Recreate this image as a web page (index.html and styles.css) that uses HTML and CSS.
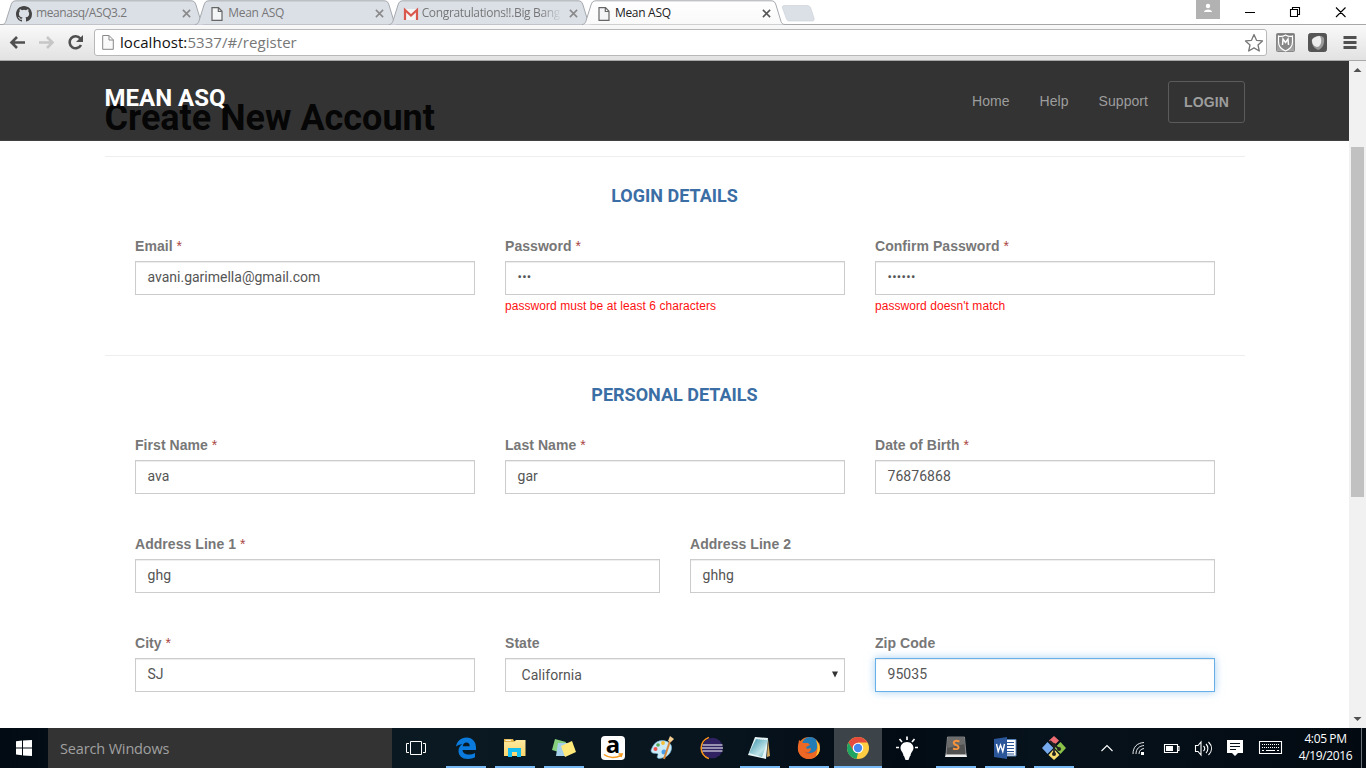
FILE: index.html
```html
<!DOCTYPE html>
<html lang="en">
<head>
<meta charset="utf-8">
<title>Mean ASQ</title>
<link rel="stylesheet" href="styles.css">
</head>
<body>
<svg class="defs" width="0" height="0" aria-hidden="true">
  <defs>
    <linearGradient id="tabActive" x1="0" y1="0" x2="0" y2="1"><stop offset="0" stop-color="#fff"/><stop offset="1" stop-color="#f9f9f9"/></linearGradient>
    <linearGradient id="silver" x1="0" y1="0" x2="0" y2="1"><stop offset="0" stop-color="#777"/><stop offset="1" stop-color="#aaa"/></linearGradient>
    <linearGradient id="folder" x1="0" y1="0" x2="0" y2="1"><stop offset="0" stop-color="#ffeaa0"/><stop offset="1" stop-color="#fad56b"/></linearGradient>
    <linearGradient id="note" x1="0" y1="0" x2="1" y2="1"><stop offset="0" stop-color="#348ea5"/><stop offset=".65" stop-color="#bde3e8"/><stop offset="1" stop-color="#5ba8b8"/></linearGradient>
    <linearGradient id="fox" x1="0" y1="0" x2="1" y2="1"><stop offset="0" stop-color="#f58220"/><stop offset=".6" stop-color="#e2491b"/><stop offset="1" stop-color="#fcb32b"/></linearGradient>
    <symbol id="tab" viewBox="0 0 203 25"><path d="M0 24.5C2 24.5 3 23.500 3.800 21.500L9 5C10 2 11 .8 14 .8H189C192 .8 193 2 194 5L199 21.500C199.800 23.500 201 24.500 203 24.500"/></symbol>
    <symbol id="page" viewBox="0 0 12 14"><path d="M1 .7H7.500L11 4.300V13.300H1ZM7.300 .7V4.500H11"/></symbol>
    <symbol id="close" viewBox="0 0 10 10"><path d="M1 1 9 9M9 1 1 9"/></symbol>
  </defs>
</svg>
<div class="screen">
  <div class="tabstrip">
    <div class="tab">
      <svg class="tab-shape"><use href="#tab"/></svg>
      <svg class="tab-icon" viewBox="0 0 16 16"><path fill="#444" d="M8 0C3.580 0 0 3.580 0 8c0 3.540 2.290 6.530 5.470 7.590.4.070.550-.17.550-.38v-1.490c-2.010.37-2.530-.49-2.690-.94-.09-.23-.48-.94-.82-1.130-.28-.15-.68-.52-.01-.53.630-.01 1.080.58 1.230.82.720 1.210 1.870.87 2.330.66.070-.52.280-.87.510-1.070-1.780-.2-3.640-.89-3.640-3.950 0-.87.310-1.590.82-2.150-.08-.2-.36-1.020.08-2.120 0 0 .67-.21 2.200.82a7.600 7.600 0 0 1 4 0c1.530-1.040 2.200-.82 2.200-.82.440 1.100.160 1.920.08 2.120.51.560.82 1.270.82 2.150 0 3.070-1.870 3.750-3.650 3.950.29.25.54.73.54 1.480v2.200c0 .21.150.46.550.38A8 8 0 0 0 16 8c0-4.420-3.580-8-8-8Z"/></svg>
      <span class="tab-title t1">meanasq/ASQ3.2</span><svg class="tab-close"><use href="#close"/></svg>
    </div>
    <div class="tab">
      <svg class="tab-shape"><use href="#tab"/></svg>
      <svg class="tab-icon doc"><use href="#page"/></svg>
      <span class="tab-title t2">Mean ASQ</span><svg class="tab-close"><use href="#close"/></svg>
    </div>
    <div class="tab">
      <svg class="tab-shape"><use href="#tab"/></svg>
      <svg class="tab-icon" viewBox="0 0 16 16"><path fill="#f4f4f4" d="M1 3H15V14H1Z"/><path fill="none" stroke="#d9574c" stroke-width="2.200" d="M2 14V4L8 9.500 14 4V14"/></svg>
      <span class="tab-title t3">Congratulations!!.Big Bang</span><svg class="tab-close"><use href="#close"/></svg>
    </div>
    <div class="tab active">
      <svg class="tab-shape"><use href="#tab"/></svg>
      <svg class="tab-icon doc"><use href="#page"/></svg>
      <span class="tab-title t2">Mean ASQ</span><svg class="tab-close"><use href="#close"/></svg>
    </div>
    <svg class="newtab" viewBox="0 0 34 18"><path d="M3 .5H26C28 .5 29 1.500 29.700 3L33 13C33.500 15 33 16 31 16H9C7 16 6 15.500 5.300 13.500L1.500 3C1 1.500 1.500 .5 3 .5Z" fill="#dbe0e7" stroke="#cdd2d8" stroke-width=".7"/></svg>
    <div class="window-buttons">
      <svg class="profile" viewBox="0 0 24 19"><path fill="#b2b2b2" d="M0 0H24V19H0Z"/><circle cx="12" cy="6" r="2.200" fill="#fff"/><path fill="#fff" d="M8 12C8 8.500 16 8.500 16 12Z"/></svg>
      <svg class="controls" viewBox="0 0 120 24"><path fill="none" stroke="#000" stroke-width="1.100" d="M7 12.500H17M52.500 9.500H59.500V16.500H52.500ZM54.500 9V7.500H61.500V14.500H60M98 7.500 107.500 17M107.500 7.500 98 17"/></svg>
    </div>
  </div>

  <div class="toolbar">
    <svg class="nav-icons" viewBox="0 0 94 35"><g fill="none" stroke-width="2.600"><path stroke="#505050" d="M25 17.500H12M17 12 11.500 17.500 17 23"/><path stroke="#c6c6c6" d="M39 17.500H52M47 12 52.500 17.500 47 23"/><path stroke="#505050" d="M80.300 13.500A6 6 0 1 0 81 20"/></g><path fill="#505050" d="M83 10V17H76Z"/></svg>
    <div class="omnibox">
      <svg class="url-icon" viewBox="0 0 12 15"><path fill="#fafafa" stroke="#888" d="M.7.500H7L11.300 4.800V14.300H.7ZM7 .5V5H11.300"/></svg>
      <span class="url"><b>localhost:</b>5337/#/register</span>
      <svg class="star" viewBox="0 0 20 20"><path fill="#fff" stroke="#777" stroke-width="1.300" stroke-linejoin="round" d="M10 1.500 12.500 7.300 18.500 7.900 14 12 15.300 18 10 14.900 4.700 18 6 12 1.500 7.900 7.500 7.300Z"/></svg>
    </div>
    <svg class="extensions" viewBox="0 0 99 35"><rect x="9.500" y="8.500" width="18" height="18" rx="1" fill="url(#silver)" stroke="#888"/><path d="M11.500 11C14 12 16 11.500 18.500 10 21 11.500 23 12 25.500 11V17C25.500 21 23 24 18.500 26 14 24 11.500 21 11.500 17Z" fill="#888" stroke="#fff" stroke-width="1.200"/><path d="M15.500 20 16 14 18.500 17.500 21 14 21.500 20" fill="none" stroke="#fff" stroke-width="1.500"/><rect x="41.500" y="8.500" width="18" height="18" rx="2" fill="#555" stroke="#555"/><path d="M45 14C48 11 54 9 57 13 58 19 55 24 51 25 46 23 44 18 45 14Z" fill="#999"/><path d="M45 15C47 12 50 11 53 11 56 17 53 22 50 22 46 21 45 18 45 15Z" fill="#eee"/><path d="M76.500 12.500H89.500M76.500 17.500H89.500M76.500 22.500H89.500" stroke="#505050" stroke-width="3" /></svg>
  </div>

  <div class="viewport">
    <header class="navbar">
      <div class="navbar-inner">
        <span class="brand">MEAN ASQ</span>
        <nav class="links"><a>Home</a><a>Help</a><a>Support</a><a class="login">LOGIN</a></nav>
      </div>
    </header>
    <main class="content">
      <h1>Create New Account</h1>
      <section class="group">
        <h2>LOGIN DETAILS</h2>
        <div class="row three">
          <div class="field"><label>Email <i>*</i></label><div class="input email">avani.garimella@gmail.com</div></div>
          <div class="field"><label>Password <i>*</i></label><div class="input dots">•••</div><p class="error">password must be at least 6 characters</p></div>
          <div class="field"><label>Confirm Password <i>*</i></label><div class="input dots">••••••</div><p class="error">password doesn't match</p></div>
        </div>
      </section>
      <section class="group">
        <h2>PERSONAL DETAILS</h2>
        <div class="row three">
          <div class="field"><label>First Name <i>*</i></label><div class="input">ava</div></div>
          <div class="field"><label>Last Name <i>*</i></label><div class="input">gar</div></div>
          <div class="field"><label>Date of Birth <i>*</i></label><div class="input">76876868</div></div>
        </div>
        <div class="row two">
          <div class="field"><label>Address Line 1 <i>*</i></label><div class="input">ghg</div></div>
          <div class="field"><label>Address Line 2</label><div class="input">ghhg</div></div>
        </div>
        <div class="row three">
          <div class="field"><label>City <i>*</i></label><div class="input">SJ</div></div>
          <div class="field"><label>State</label><div class="input select"><span>California</span><svg viewBox="0 0 6 7"><path d="M0 .5H6L3 6.500Z" fill="#333"/></svg></div></div>
          <div class="field"><label>Zip Code</label><div class="input focus">95035</div></div>
        </div>
      </section>
    </main>
    <div class="scrollbar"><svg viewBox="0 0 17 17"><path fill="#505050" d="M4.500 11 8.500 7 12.500 11Z"/></svg><div class="thumb"></div><svg viewBox="0 0 17 17"><path fill="#505050" d="M4.500 6 8.500 10 12.500 6Z"/></svg></div>
  </div>

  <footer class="taskbar">
    <svg class="start" viewBox="0 0 48 40"><path fill="#fff" d="M16 13.300 22 12.600V19.500H16ZM23 12.500 32 12V19.500H23ZM16 20.500H22V27.300L16 26.500ZM23 20.500H32V28L23 27.400Z"/></svg>
    <div class="search">Search Windows</div>
    <svg class="taskview" viewBox="0 0 50 40"><path fill="none" stroke="#fff" d="M19.500 13.500H30.500V26.500H19.500ZM18 15.500H15.500V24.500H18M32 15.500H34.500V24.500H32"/></svg>
    <div class="apps">
      <div class="app open"><svg viewBox="0 0 24 24"><path fill="#0a7bdc" d="M2 10.500C3 5 7 1.500 12.500 1.500 18.500 1.500 22 6 22 11.500V14H8.500C8.700 17 11.500 18.500 14.500 18.500 17 18.500 19 18 21 17V21.300C19 22.500 16.500 23 14 23 8 23 4.500 19.500 4.500 15 4.500 12 6 9.500 8.500 8 5.500 8.300 3.500 9.500 2 10.500ZM8.800 10.200H15.700C15.700 7.700 14.500 6.500 12.500 6.500 10.500 6.500 9 8 8.800 10.200Z"/></svg></div>
      <div class="app open"><svg viewBox="0 0 24 24"><path fill="#e3b447" d="M1 3H10L11 5H21V9H1Z"/><path fill="url(#folder)" d="M1 6H11L13 4H22.500V20H1Z"/><path fill="#16bdf1" d="M5 12H18V21H14V16H9V21H5Z"/><path fill="#fff" d="M2.500 3.800H8V4.800H2.500Z"/></svg></div>
      <div class="app open"><svg viewBox="0 0 24 24"><path fill="#86cf7e" d="M3 3 14 6 10 17 0 14Z"/><path fill="#a5d0ea" d="M6 7H17L15 20H4Z"/><path fill="#ffe97a" d="M9 10 20 5 24 16 13 21Z"/></svg></div>
      <div class="app"><svg viewBox="0 0 24 24"><rect width="24" height="24" rx="4" fill="#fff"/><text class="amazon" x="12" y="17" text-anchor="middle">a</text><path fill="none" stroke="#f79a1e" stroke-width="1.600" d="M3 18.500C8 22.500 15 22 20 19.500M17.500 18H21L20 21"/></svg></div>
      <div class="app"><svg viewBox="0 0 24 24"><path fill="#cdeaf7" stroke="#72b6d5" stroke-width=".7" d="M3 10C7 3 17 3 21 9 23 14 19 21 12 22 8 23 6 22 8 19 9 16 2 19 1 15 1 13.500 2 12 3 10Z"/><circle cx="5.500" cy="13" r="2" fill="#ef5350"/><circle cx="8" cy="9" r="1.800" fill="#55aa55"/><circle cx="13" cy="7" r="1.900" fill="#f7be34"/><circle cx="14" cy="16" r="2.500" fill="#4a9ee9"/><path stroke="#d8883b" stroke-width="2" d="M20 5 14 23"/><path fill="#f5cf92" d="M18 5 20 0 24 3 21 6Z"/></svg></div>
      <div class="app"><svg viewBox="0 0 24 24"><path fill="none" stroke="#f7941e" stroke-width="1.800" d="M10 1.500A11 11 0 0 0 10 22.500"/><circle cx="13.500" cy="12" r="10.300" fill="#302163"/><path stroke="#fff" stroke-width="1.200" d="M3.500 9H23.500M3 12H24M3.500 15H23.500"/></svg></div>
      <div class="app open"><svg viewBox="0 0 24 24"><path fill="#d6ad61" d="M20 3 22 20 19 21Z"/><path fill="#e5f4f5" d="M7 1 20 2 18 23 0 19Z"/><path fill="url(#note)" d="M8 3 20 4 14 21 1 17Z"/><path stroke="#e9f6f7" stroke-dasharray="1 1" d="M8 2.500 20 3.500"/></svg></div>
      <div class="app open"><svg viewBox="0 0 24 24"><circle cx="12" cy="12" r="11" fill="url(#fox)"/><circle cx="13" cy="9" r="8" fill="#247cb6"/><path fill="#ee6825" d="M2 4 6 7 11 7 13 9 9 11 10 13 14 12C14 17 9 18 6 14 10 21 19 18 20 12L22 6C25 16 19 23 12 23 4 23 0 17 1 10Z"/><path fill="#ffc531" d="M19 4C24 9 24 17 19 20 21 15 21 9 19 4Z"/></svg></div>
      <div class="app open selected"><svg viewBox="0 0 24 24"><circle cx="12" cy="12" r="11" fill="#ffcd42"/><path fill="#e44b3c" d="M2.500 6.500A11 11 0 0 1 21.500 6.500H12V12L7 15Z"/><path fill="#20a464" d="M2.500 6.500 7.500 15 12 17 10.500 23A11 11 0 0 1 2.500 6.500Z"/><circle cx="12" cy="12" r="5.300" fill="#fff"/><circle cx="12" cy="12" r="4.200" fill="#4587ef"/></svg></div>
      <div class="app"><svg viewBox="0 0 24 24"><path fill="#fff" d="M12 6C16 6 18.500 9 18.500 12 18.500 15 15.500 16.500 15.500 20H15L13.500 24H10.500L9 20H8.500C8.500 16.500 5.500 15 5.500 12 5.500 9 8 6 12 6Z"/><path stroke="#fff" stroke-width="1.700" d="M12 .5V4M4.500 3 7 6M19.500 3 17 6M1 11.500H4M20 11.500H23"/></svg></div>
      <div class="app open"><svg viewBox="0 0 24 24"><path fill="#eee" d="M2 17 1 21H23L22 17Z"/><path fill="#515151" stroke="#aaa" stroke-width=".7" d="M3.500 1H20.500L22 18.500H2Z"/><path fill="#6c6c6c" d="M4 1.500H20L20.500 8 3.500 12Z"/><path fill="none" stroke="#f7933c" stroke-width="2" d="M15.500 5.500C9.500 3 8 7.500 12 9 16.500 10.500 15 14.500 9 12.500"/></svg></div>
      <div class="app open"><svg viewBox="0 0 24 24"><path fill="#fff" stroke="#5682b6" d="M12 3.500H23V20H12Z"/><path stroke="#2b579a" d="M14 6.500H21M14 9.500H21M14 12.500H21M14 15.500H21M14 18H21"/><path fill="#2b579a" d="M1 3 14 1V23L1 21Z"/><path fill="none" stroke="#fff" stroke-width="1.400" d="M3.500 8 5.200 15.500 7.500 9 9.800 15.500 11.500 8"/></svg></div>
      <div class="app open"><svg viewBox="0 0 24 24"><path fill="#ed6c73" d="M7 4.500 12 0 17 4.500 12 9.500Z"/><path fill="#76a9ee" d="M0 12 5.500 6 11.500 12 5.500 18Z"/><path fill="#8bc34a" d="M18.500 6 24 12 18.500 18 12.500 12Z"/><path fill="#f7dd70" d="M6.500 19 12 13 17.500 19 12 24Z"/><path stroke="#222" stroke-width="1.700" d="M8 5 17 13M12 8V19"/><circle cx="12" cy="9" r="2" fill="#222"/><circle cx="17" cy="13" r="2" fill="#222"/><circle cx="12" cy="18" r="2" fill="#222"/></svg></div>
    </div>
    <svg class="tray" viewBox="0 0 198 40"><g fill="none" stroke="#fff" stroke-width="1.100"><path d="M10.500 23 16 17.500 21.500 23"/><path stroke-width=".9" d="M48 26C48 22.500 50 21 53 20.500M45 26C45 20.500 48.500 18 53 17.500M42 26C42 19 46 15 53 14.500"/><path d="M73.500 16.500H86.500V24.500H73.500ZM86.500 18.500H88V22.500H86.500M104.500 17.500H107L110 14V27L107 23.500H104.500ZM112.500 18C114 19.500 114 21.500 112.500 23M115 16C117.500 18.500 117.500 22.500 115 25M117.500 14C121.500 18 121.500 23 117.500 27M168.500 13.500H190.500V25.500H168.500Z"/><path stroke-dasharray="1 1" d="M171 16.500H188M171 19.500H188"/><path d="M171 22.500H173M175 22.500H184M186 22.500H188"/></g><path fill="#fff" d="M50 24H53V27H50ZM75 18H82V23H75ZM136 12H152V25H147L144 28 141 25H136Z"/><path stroke="#06111a" d="M139 15.500H149M139 18.500H149M139 21.500H145"/></svg>
    <div class="clock"><span>4:05 PM</span><span>4/19/2016</span></div>
  </footer>
</div>
</body>
</html>
```

FILE: styles.css
```css
* { box-sizing: border-box; }
body { margin: 0; background: #fff; font-family: "Liberation Sans", Arial, sans-serif; }
svg { display: block; flex: none; }
.defs { position: absolute; }
.screen { width: 1366px; height: 768px; overflow: hidden; display: flex; flex-direction: column; }

.tabstrip { height: 25px; flex: none; display: flex; padding-left: 2px; border-bottom: 1px solid #a5a7a9; font-family: "Open Sans", "Noto Sans", sans-serif; }
.tab { position: relative; width: 203px; height: 25px; margin-right: -9.700px; flex: none; display: flex; align-items: center; padding: 2px 14px 0 14px; }
.tab-shape { position: absolute; left: 0; top: 0; width: 203px; height: 25px; fill: #dbe0e7; stroke: #a5a9ad; stroke-width: 1; z-index: 0; }
.active { z-index: 2; }
.active .tab-shape { fill: url(#tabActive); }
.tab-icon { position: relative; width: 16px; height: 16px; }
.tab-icon.doc { width: 12px; height: 14px; margin: 0 2px; fill: #f4f5f7; stroke: #666; stroke-width: 1.200; }
.tab-title { position: relative; width: 142px; margin: 0 8px 1px 4px; font-size: 12px; line-height: 16px; color: #777; white-space: nowrap; overflow: hidden; }
.tab:nth-child(3) .tab-title { margin-left: 3px; width: 143px; -webkit-mask-image: linear-gradient(90deg, #000 118px, transparent 140px); mask-image: linear-gradient(90deg, #000 118px, transparent 140px); }
.active .tab-title { color: #222; }
.t1 { letter-spacing: -.4px; }
.t2 { letter-spacing: -.3px; }
.t3 { letter-spacing: -.35px; }
.tab:nth-child(2) .tab-title { letter-spacing: -.3px; }
.active .tab-title, .tab:nth-child(2) .tab-title { margin-left: 3px; width: 143px; }
.tab-close { position: relative; width: 9px; height: 9px; stroke: #888; stroke-width: 1.700; }
.active .tab-close { stroke: #555; }
.newtab { width: 34px; height: 18px; margin: 5px 0 0 6px; }
.window-buttons { display: flex; margin-left: auto; padding-right: 8px; }
.profile { width: 24px; height: 19px; margin-right: 18px; }
.controls { width: 120px; height: 24px; }

.toolbar { height: 36px; flex: none; display: flex; background: linear-gradient(#f9f9f9, #e2e2e2); border-bottom: 1px solid #a8a8a8; }
.nav-icons { width: 94px; height: 35px; }
.omnibox { width: 1173px; height: 27px; margin-top: 4px; border: 1px solid #b8b8b8; border-radius: 3px; background: #fff; display: flex; align-items: center; padding: 0 2px 0 7px; }
.url-icon { width: 12px; height: 15px; }
.url { flex: 1; margin: -1px 0 0 6px; font-family: "Open Sans", "Noto Sans", sans-serif; font-size: 15px; letter-spacing: .06px; color: #777; }
.url b { font-weight: 400; color: #111; }
.star { width: 20px; height: 20px; }
.extensions { width: 99px; height: 35px; }

.viewport { position: relative; height: 667px; flex: none; overflow: hidden; background: #fff; }
.navbar { position: absolute; top: 0; left: 0; width: 1349px; height: 80px; background: rgba(0, 0, 0, .8); border-bottom: 1px solid #414141; z-index: 2; }
.navbar-inner { width: 1140px; margin: 0 0 0 105px; padding-top: 20px; display: flex; justify-content: space-between; }
.brand { margin-left: -.5px; font: 700 24px/34px Roboto, sans-serif; color: #fff; }
.links { display: flex; gap: 30px; font-size: 14px; line-height: 40px; letter-spacing: .05px; color: #9d9d9d; }
.login { width: 77px; height: 42px; margin-left: -10px; border: 1px solid #5b5b5b; border-radius: 3px; text-align: center; font-weight: 700; letter-spacing: .1px; line-height: 41px; }
.content { width: 1140px; margin-left: 105px; }
h1 { height: 95px; margin: 0 0 0 -.5px; padding-top: 37px; font: 700 36px/40px Roboto, sans-serif; color: #222; }
.group { border-top: 1px solid #eee; padding: 0 30px; height: 199px; }
.group + .group { height: auto; }
h2 { height: 79px; margin: 0 0 0 -1px; padding-top: 29px; font: 700 18px/20px Roboto, sans-serif; color: #3a6ea5; text-align: center; }
.row { display: grid; column-gap: 30px; height: 99px; }
.three { grid-template-columns: repeat(3, 1fr); }
.two { grid-template-columns: repeat(2, 1fr); }
label { display: block; height: 25px; font-size: 14px; line-height: 20px; font-weight: 700; letter-spacing: .05px; color: #777; }
label i { font-style: normal; font-weight: 400; color: #a94442; }
.input { height: 34px; border: 1px solid #ccc; padding: 0 11.500px; font: 400 14px/31px Roboto, sans-serif; letter-spacing: .05px; color: #555; box-shadow: inset 0 1px 1px rgba(0, 0, 0, .075); }
.email { letter-spacing: 0; }
.dots { font-size: 13px; line-height: 29px; letter-spacing: .3px; }
.error { margin: 2px 0 0; font-size: 12px; line-height: 18px; color: #f11; letter-spacing: .06px; }
.select { display: flex; align-items: center; justify-content: space-between; padding: 1px 6px 0 15.500px; }
.select svg { width: 6px; height: 7px; margin-bottom: 2px; }
.focus { border-color: #66afe9; box-shadow: inset 0 1px 1px rgba(0, 0, 0, .075), 0 0 8px rgba(102, 175, 233, .6); }
.scrollbar { position: absolute; right: 0; top: 0; width: 17px; height: 667px; background: #f1f1f1; display: flex; flex-direction: column; }
.scrollbar svg { width: 17px; height: 17px; }
.thumb { width: 13px; height: 350px; margin: 69px 2px auto; background: #c1c1c1; }

.taskbar { height: 40px; flex: none; display: flex; background: linear-gradient(90deg, #020b14, #0b1a22 430px, #08151f 700px, #020b14 900px, #07131c 1040px, #020911); font-family: "Open Sans", "Noto Sans", sans-serif; }
.start { width: 48px; height: 40px; }
.search { width: 344px; background: #333; color: #a0a0a0; padding-left: 12px; font-size: 14.500px; line-height: 41px; letter-spacing: -.15px; }
.taskview { width: 50px; height: 40px; margin-left: -1px; }
.apps { display: flex; gap: 1px; margin-left: 1px; }
.app { width: 48px; height: 40px; padding: 8px 12px; }
.app svg { width: 24px; height: 24px; }
.open { background: linear-gradient(#76b9f5, #76b9f5) 50% 100% / 40px 2px no-repeat; }
.selected { background: linear-gradient(#76b9f5, #76b9f5) 0 100% / 48px 2px no-repeat, #3c4449; }
.amazon { font: 700 24px "Noto Sans", sans-serif; }
.tray { width: 198px; height: 40px; margin-left: 13px; }
.clock { width: 73px; border-right: 1px solid #68717a; display: flex; flex-direction: column; align-items: center; color: #fff; font-size: 12px; line-height: 17px; padding: 2px 0 0 1px; letter-spacing: -.38px; }
```
